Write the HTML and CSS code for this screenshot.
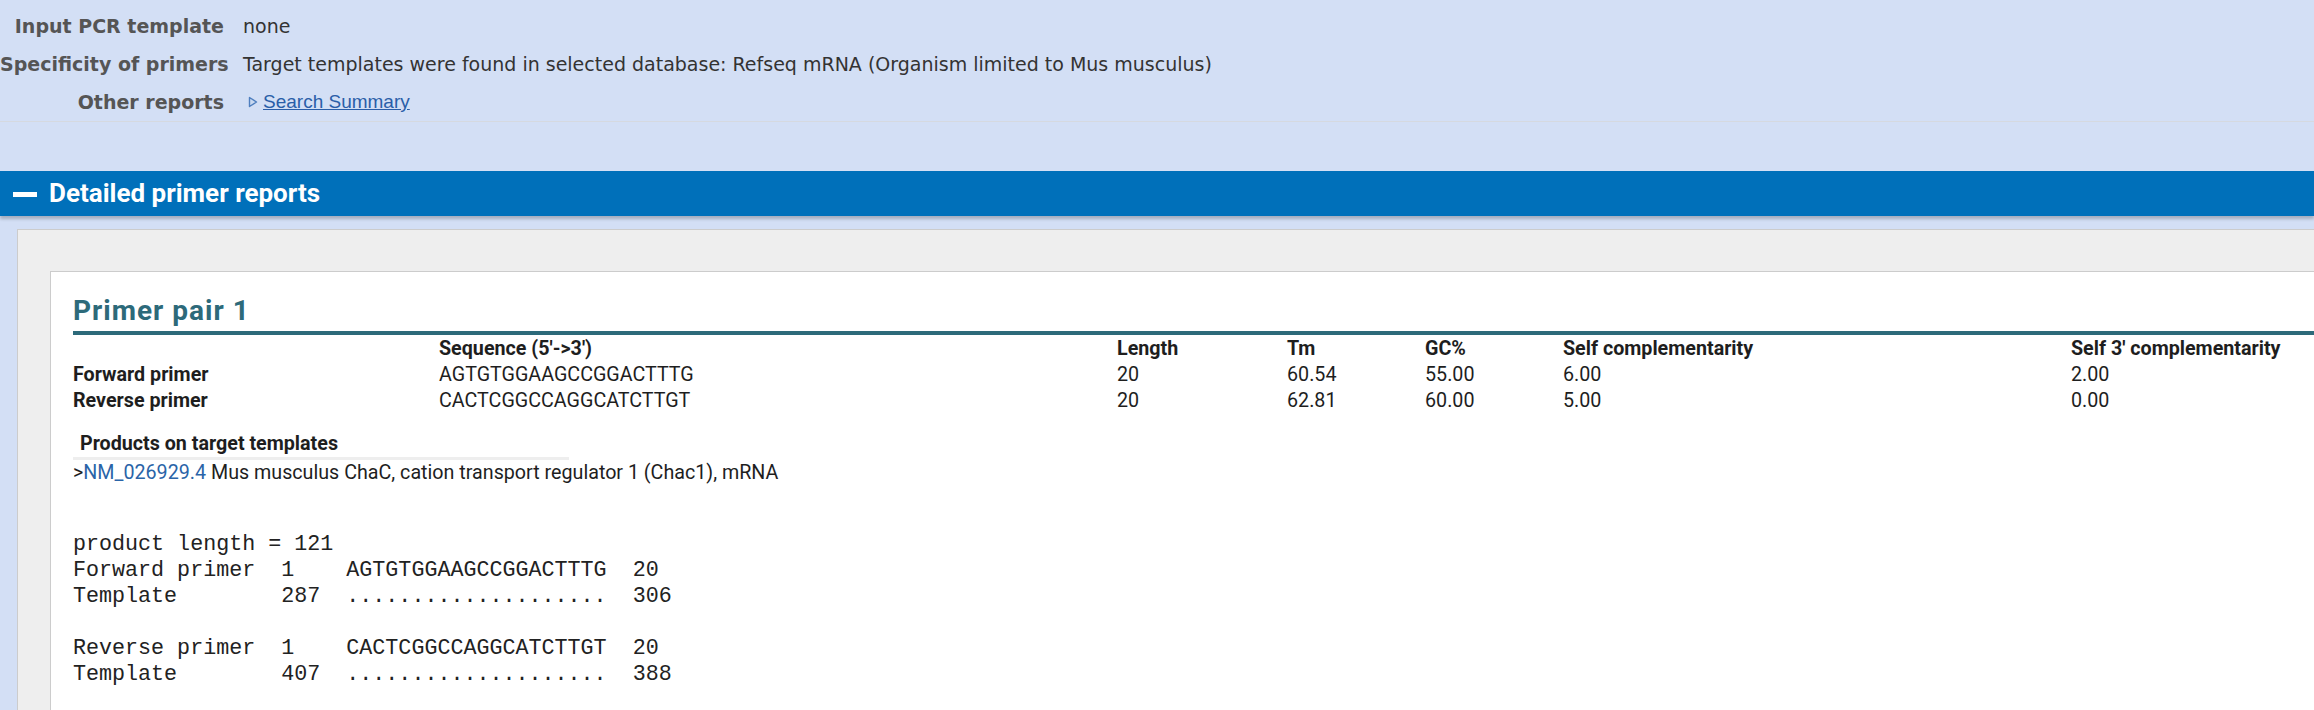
FILE: index.html
```html
<!DOCTYPE html>
<html lang="en">
<head>
<meta charset="utf-8">
<title>Primer-BLAST results</title>
<link rel="stylesheet" href="styles.css">
</head>
<body>
<section class="summary">
  <div class="s-label">Input PCR template</div>
  <div class="s-value">none</div>
  <div class="s-label">Specificity of primers</div>
  <div class="s-value">Target templates were found in selected database: Refseq mRNA (Organism limited to Mus musculus)</div>
  <div class="s-label">Other reports</div>
  <div class="s-value"><span class="tri"><svg width="10" height="12" viewBox="0 0 10 12"><path d="M1.5 1.5 L8.5 6 L1.5 10.5 Z" fill="#c9d9f0" stroke="#4f7fbf" stroke-width="1.4" stroke-linejoin="round"/></svg></span><a class="s-link" href="#">Search Summary</a></div>
</section>

<div class="section-bar">
  <span class="minus"></span>
  <h2 class="section-title">Detailed primer reports</h2>
</div>

<div class="panel">
  <div class="card">
    <h3 class="pair-title">Primer pair 1</h3>
    <div class="ptable">
      <div class="cell"></div>
      <div class="cell th">Sequence (5'-&gt;3')</div>
      <div class="cell th">Length</div>
      <div class="cell th">Tm</div>
      <div class="cell th">GC%</div>
      <div class="cell th">Self complementarity</div>
      <div class="cell th">Self 3' complementarity</div>

      <div class="cell th">Forward primer</div>
      <div class="cell">AGTGTGGAAGCCGGACTTTG</div>
      <div class="cell">20</div>
      <div class="cell">60.54</div>
      <div class="cell">55.00</div>
      <div class="cell">6.00</div>
      <div class="cell">2.00</div>

      <div class="cell th">Reverse primer</div>
      <div class="cell">CACTCGGCCAGGCATCTTGT</div>
      <div class="cell">20</div>
      <div class="cell">62.81</div>
      <div class="cell">60.00</div>
      <div class="cell">5.00</div>
      <div class="cell">0.00</div>
    </div>

    <div class="products-title">Products on target templates</div>
    <div class="products-bar"></div>
    <div class="target">&gt;<a class="acc" href="#">NM_026929.4</a> Mus musculus ChaC, cation transport regulator 1 (Chac1), mRNA</div>

<pre class="align">product length = 121
Forward primer  1    AGTGTGGAAGCCGGACTTTG  20
Template        287  ....................  306

Reverse primer  1    CACTCGGCCAGGCATCTTGT  20
Template        407  ....................  388</pre>
  </div>
</div>
</body>
</html>
```

FILE: styles.css
```css
html, body {
  margin: 0;
  padding: 0;
  overflow: hidden;
}

body {
  background: #d3dff5;
  width: 2314px;
  height: 710px;
}

.summary {
  display: grid;
  grid-template-columns: 224px 1fr;
  column-gap: 19px;
  grid-auto-rows: 38px;
  align-items: center;
  padding-top: 7px;
  border-bottom: 1px solid #d5d9e0;
  font-family: "DejaVu Sans", sans-serif;
  font-size: 19px;
}

.s-label {
  text-align: right;
  font-weight: bold;
  color: #555;
  white-space: nowrap;
}

.s-value {
  color: #333;
  white-space: nowrap;
  display: flex;
  align-items: center;
}

.tri {
  display: inline-flex;
  margin: 0 5px 0 5px;
}

.s-link {
  color: #2a5ea8;
  text-decoration: underline;
  font-family: "Liberation Sans", Arial, sans-serif;
  font-size: 19px;
}

.section-bar {
  margin-top: 49px;
  height: 45px;
  background: #0070ba;
  display: flex;
  align-items: center;
  box-shadow: 0 3px 3px rgba(0, 0, 0, 0.22);
  position: relative;
}

.minus {
  width: 24px;
  height: 5px;
  background: #fff;
  margin: 2px 12px 0 13px;
}

.section-title {
  margin: 0;
  color: #fff;
  font-family: Roboto, "Liberation Sans", sans-serif;
  font-weight: bold;
  font-size: 26px;
  line-height: 45px;
}

.panel {
  margin: 13px 0 0 17px;
  width: 2400px;
  background: #eeeeee;
  border: 1px solid #cccccc;
  border-right: none;
  padding: 41px 0 0 32px;
}

.card {
  background: #fff;
  border: 1px solid #cccccc;
  border-right: none;
  padding: 23px 0 0 22px;
  height: 500px;
  font-family: Roboto, "Liberation Sans", sans-serif;
  color: #1e1e1e;
}

.pair-title {
  margin: 0;
  font-size: 28px;
  line-height: 32px;
  letter-spacing: 1px;
  font-weight: bold;
  color: #2d6a7a;
  padding-bottom: 4px;
  border-bottom: 4px solid #2d6a7a;
}

.ptable {
  display: grid;
  grid-template-columns: 366px 678px 170px 138px 138px 508px 300px;
  grid-auto-rows: 26px;
  align-items: center;
  font-size: 19.7px;
  white-space: nowrap;
}

.th {
  font-weight: bold;
}

.products-title {
  margin-top: 18px;
  padding-left: 7px;
  font-weight: bold;
  font-size: 19.7px;
  line-height: 26px;
}

.products-bar {
  width: 496px;
  height: 3px;
  background: #eeeeee;
}

.target {
  font-size: 19.7px;
  line-height: 26px;
}

.acc {
  color: #2a64a8;
  text-decoration: none;
}

.align {
  margin: 46px 0 0;
  font-family: "Liberation Mono", "Courier New", monospace;
  font-size: 21.7px;
  line-height: 26px;
  color: #222;
}
```
